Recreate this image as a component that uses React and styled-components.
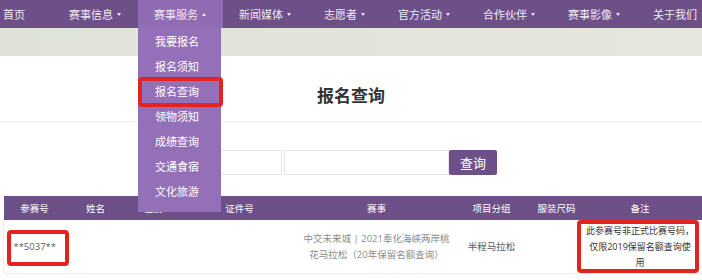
import React from "react";
import styled, { createGlobalStyle, css } from "styled-components";

const GlobalStyle = createGlobalStyle`
  body {
    margin: 0;
    background: #ffffff;
    overflow: hidden;
    font-family: "Open Sans", "Noto Sans CJK SC", sans-serif;
  }
`;

const menu = [
  { label: "首页", first: true },
  { label: "赛事信息", caret: "down" },
  { label: "赛事服务", caret: "up", active: true },
  { label: "新闻媒体", caret: "down" },
  { label: "志愿者", caret: "down" },
  { label: "官方活动", caret: "down" },
  { label: "合作伙伴", caret: "down" },
  { label: "赛事影像", caret: "down" },
  { label: "关于我们" },
];

const services = ["我要报名", "报名须知", "报名查询", "领物须知", "成绩查询", "交通食宿", "文化旅游"];

const columns = [
  { title: "参赛号", width: 62 },
  { title: "姓名", width: 60 },
  { title: "性别", width: 55 },
  { title: "证件号", width: 118 },
  { title: "赛事", width: 156 },
  { title: "项目分组", width: 74 },
  { title: "服装尺码", width: 56 },
  { title: "备注", width: 119 },
];

const App = () => {
  return (
    <Page>
      <GlobalStyle />
      <NavBar>
        {menu.map((item) => (
          <NavItem key={item.label} $first={item.first} $active={item.active}>
            {item.label}
            {item.caret && <Caret $up={item.caret === "up"} />}
            {item.active && (
              <Dropdown>
                {services.map((s) => (
                  <DropItem key={s} $marked={s === "报名查询"}>{s}</DropItem>
                ))}
              </Dropdown>
            )}
          </NavItem>
        ))}
      </NavBar>
      <Band />
      <TitleBar>
        <Title>报名查询</Title>
      </TitleBar>
      <SearchRow>
        <Field $w={77} />
        <Field $w={165} />
        <SearchButton>查询</SearchButton>
      </SearchRow>
      <Table>
        <colgroup>
          {columns.map((c) => (
            <col key={c.title} style={{ width: c.width }} />
          ))}
        </colgroup>
        <thead>
          <tr>
            {columns.map((c) => (
              <Th key={c.title} $note={c.title === "备注"}>{c.title}</Th>
            ))}
          </tr>
        </thead>
        <tbody>
          <tr>
            <Td>
              **5037**
              <Mark $left={3} $top={10} $w={62} $h={36} />
            </Td>
            <Td />
            <Td />
            <Td />
            <Td $tone="light">
              中交未来城 | 2021奉化海峡两岸桃
              <br />
              花马拉松（20年保留名额查询）
            </Td>
            <Td>半程马拉松</Td>
            <Td />
            <Td $tone="dark">
              此参赛号非正式比赛号码，
              <br />
              仅限2019保留名额查询使
              <br />
              用
              <Mark $left={-8} $top={0} $w={122} $h={53} />
            </Td>
          </tr>
        </tbody>
      </Table>
    </Page>
  );
};

export default App;

const Page = styled.div`
  width: 702px;
  height: 280px;
  position: relative;
`;

const NavBar = styled.nav`
  display: flex;
  height: 28px;
  background: #6d5088;
  position: relative;
  z-index: 10;
`;

const NavItem = styled.div`
  position: relative;
  display: flex;
  align-items: center;
  flex-shrink: 0;
  height: 28px;
  padding: 0 17px 0 16px;
  font-size: 11px;
  color: #efe9f4;
  white-space: nowrap;
  ${(p) => p.$first && css`
    padding: 0 28px 0 3px;
  `}
  ${(p) => p.$active && css`
    background: #8f6cb3;
  `}
`;

const Caret = styled.span`
  margin-left: 4px;
  width: 0;
  height: 0;
  border-left: 2.5px solid transparent;
  border-right: 2.5px solid transparent;
  ${(p) => p.$up
    ? css`border-bottom: 3px solid #efe9f4;`
    : css`border-top: 3px solid #efe9f4;`}
`;

const Dropdown = styled.div`
  position: absolute;
  top: 28px;
  left: 0;
  width: 83px;
  padding: 1px 0 8px;
  background: #9370b8;
  display: flex;
  flex-direction: column;
`;

const DropItem = styled.div`
  position: relative;
  height: 25px;
  line-height: 25px;
  padding-left: 17px;
  font-size: 11px;
  color: #ffffff;
  ${(p) => p.$marked && css`
    &::after {
      content: "";
      position: absolute;
      top: -2px;
      bottom: -3px;
      left: 0;
      right: -2px;
      border: 4px solid #e3231f;
      border-radius: 4px;
    }
  `}
`;

const Band = styled.div`
  height: 28px;
  background: linear-gradient(90deg, #dfe2d8, #e5e6dc);
`;

const TitleBar = styled.div`
  padding: 28px 0 15px;
  border-bottom: 1px solid #ececec;
  text-align: center;
`;

const Title = styled.h2`
  margin: 0;
  font-size: 17px;
  line-height: 22px;
  font-weight: 700;
  color: #333333;
  font-family: "Noto Sans CJK SC", sans-serif;
`;

const SearchRow = styled.div`
  display: flex;
  justify-content: center;
  gap: 2px;
  margin-top: 28px;
  height: 25px;
`;

const Field = styled.div`
  width: ${(p) => p.$w}px;
  box-sizing: border-box;
  border: 1px solid #e6e6e6;
`;

const SearchButton = styled.button`
  width: 48px;
  margin-left: -2px;
  border: 0;
  border-radius: 2px;
  background: #6d5088;
  color: #ffffff;
  font-size: 13px;
  font-family: "Noto Sans CJK SC", sans-serif;
  padding: 0;
`;

const Table = styled.table`
  margin: 21px 0 0 3px;
  width: 700px;
  table-layout: fixed;
  border-collapse: collapse;
  font-size: 9.5px;
`;

const Th = styled.th`
  height: 24px;
  padding: ${(p) => (p.$note ? "0 8px 0 0" : "0")};
  background: #6d5088;
  color: #ffffff;
  font-weight: 400;
  font-size: 9.5px;
  text-align: center;
`;

const Td = styled.td`
  position: relative;
  height: 53px;
  padding: 0 2px;
  text-align: center;
  line-height: 16px;
  color: #5a5a5a;
  border-bottom: 1px solid #ececec;
  &:first-child {
    border-left: 1px solid #ececec;
  }
  ${(p) => p.$tone === "light" && css`color: #8c8c8c;`}
  ${(p) => p.$tone === "dark" && css`
    color: #333333;
    font-size: 9px;
    padding: 0 8px 0 0;
  `}
`;

const Mark = styled.span`
  position: absolute;
  left: ${(p) => p.$left}px;
  top: ${(p) => p.$top}px;
  width: ${(p) => p.$w}px;
  height: ${(p) => p.$h}px;
  box-sizing: border-box;
  border: 4px solid #e3231f;
  border-radius: 4px;
`;
